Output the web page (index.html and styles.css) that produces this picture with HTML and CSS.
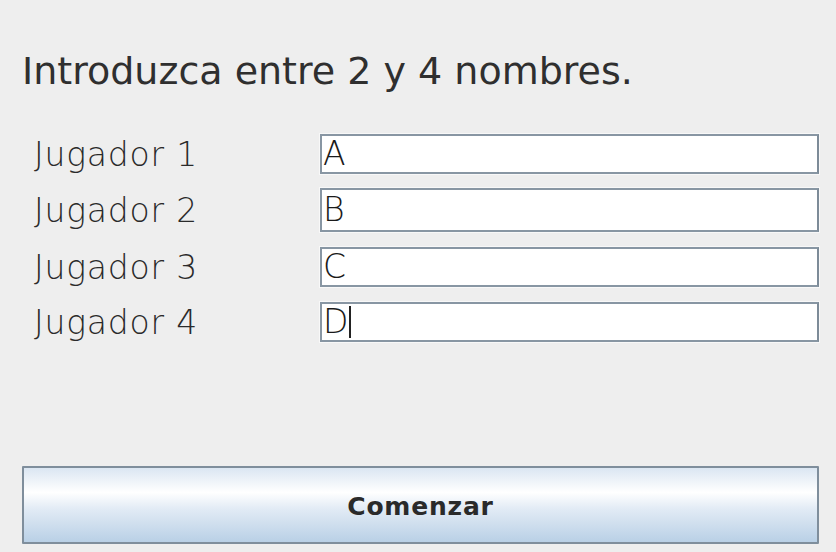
FILE: index.html
```html
<!DOCTYPE html>
<html>
<head>
<meta charset="utf-8">
<link rel="stylesheet" href="styles.css">
</head>
<body>
<div class="window">
  <h1 class="title">Introduzca entre 2 y 4 nombres.</h1>
  <div class="form">
    <div class="row r1"><span class="label">Jugador 1</span><div class="field">A</div></div>
    <div class="row r2"><span class="label">Jugador 2</span><div class="field tall">B</div></div>
    <div class="row r3"><span class="label">Jugador 3</span><div class="field">C</div></div>
    <div class="row r4"><span class="label">Jugador 4</span><div class="field">D<span class="caret"></span></div></div>
  </div>
  <button class="start">Comenzar</button>
</div>
</body>
</html>
```
FILE: styles.css
```css
html, body {
  margin: 0;
  padding: 0;
  background: #eeeeee;
  width: 836px;
  height: 552px;
  overflow: hidden;
}
.window {
  display: flex;
  flex-direction: column;
  padding: 48px 17px 0 22px;
  font-family: "DejaVu Sans", sans-serif;
  color: #3c3c3c;
}
.title {
  margin: 0;
  font-size: 38px;
  font-weight: 400;
  line-height: 46px;
  color: #2f2f2f;
}
.form {
  display: flex;
  flex-direction: column;
  margin-top: 40px;
}
.row {
  display: flex;
  align-items: center;
}
.r2 { margin-top: 14px; }
.r3 { margin-top: 15px; }
.r4 { margin-top: 15px; }
.label {
  width: 298px;
  box-sizing: border-box;
  padding-left: 12px;
  font-size: 33px;
  font-weight: 200;
  letter-spacing: 0.8px;
  color: #2a2a2a;
}
.field {
  flex: 1;
  height: 40px;
  box-sizing: border-box;
  background: #ffffff;
  border: 2px solid #8896a3;
  border-right-color: #7d8b98;
  box-shadow: inset 1px 1px 0 #ffffff, 0 0 0 1px #f8f8f8;
  font-size: 33px;
  font-weight: 200;
  line-height: 36px;
  padding-left: 1px;
  color: #1a1a1a;
  display: flex;
  align-items: center;
}
.field.tall { height: 44px; }
.caret {
  display: inline-block;
  width: 2px;
  height: 32px;
  background: #222;
  margin-left: 1px;
}
.start {
  margin-top: 124px;
  height: 78px;
  width: 797px;
  box-sizing: border-box;
  border: 2px solid #7f8e9c;
  border-radius: 1px;
  background: linear-gradient(to bottom, #dbe6f2 0%, #ffffff 33%, #e2ebf5 55%, #b9d0e6 100%);
  font-family: "DejaVu Sans", sans-serif;
  font-weight: bold;
  font-size: 25px;
  color: #2a2a2a;
  letter-spacing: 0.8px;
  padding: 2px 0 0 0;
}
```
